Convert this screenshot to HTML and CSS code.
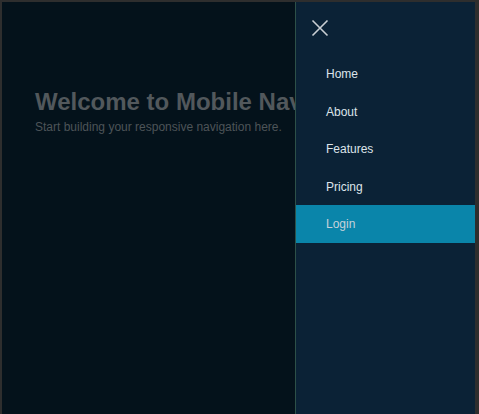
FILE: index.html
```html
<!DOCTYPE html>
<html lang="en">
<head>
<meta charset="utf-8">
<title>Mobile Nav</title>
<link rel="stylesheet" href="styles.css">
</head>
<body>
<div class="frame">
  <main class="content">
    <h1 class="title">Welcome to Mobile Navigation</h1>
    <p class="subtitle">Start building your responsive navigation here.</p>
  </main>
  <nav class="drawer">
    <button class="close" aria-label="Close menu">
      <svg width="18" height="18" viewBox="0 0 18 18"><path d="M1.5 1.5 L16.5 16.5 M16.5 1.5 L1.5 16.5" stroke="#c9ced3" stroke-width="1.6" fill="none"/></svg>
    </button>
    <ul class="menu">
      <li><a class="item" href="#">Home</a></li>
      <li><a class="item" href="#">About</a></li>
      <li><a class="item" href="#">Features</a></li>
      <li><a class="item" href="#">Pricing</a></li>
      <li><a class="item active" href="#">Login</a></li>
    </ul>
  </nav>
</div>
</body>
</html>
```
FILE: styles.css
```css
html, body {
  margin: 0;
  padding: 0;
  height: 100%;
}
body {
  background: #2e2e2e;
  font-family: "Liberation Sans", Arial, sans-serif;
  overflow: hidden;
}
.frame {
  display: flex;
  margin: 2px 4px 0 2px;
  height: 412px;
  background: #04121b;
  overflow: hidden;
}
.content {
  flex: 1;
  min-width: 0;
  overflow: hidden;
  padding: 85px 0 0 33px;
  white-space: nowrap;
}
.title {
  margin: 0;
  font-size: 24px;
  font-weight: bold;
  color: #52585c;
  line-height: 29px;
}
.subtitle {
  margin: 4px 0 0;
  font-size: 12px;
  color: #4d5458;
}
.drawer {
  flex: 0 0 179px;
  background: #0b2236;
  border-left: 1px solid #2d5048;
}
.close {
  display: block;
  margin: 17px 0 0 15px;
  padding: 0;
  width: 18px;
  height: 18px;
  background: none;
  border: 0;
  cursor: pointer;
}
.close svg { display: block; }
.menu {
  list-style: none;
  margin: 18px 0 0;
  padding: 0;
}
.item {
  display: block;
  height: 36.5px;
  line-height: 36.5px;
  padding: 1px 0 0 30px;
  font-size: 12px;
  color: #dde4ea;
  text-decoration: none;
}
.item.active {
  background: #0a85aa;
  color: #c5d2da;
}
```
